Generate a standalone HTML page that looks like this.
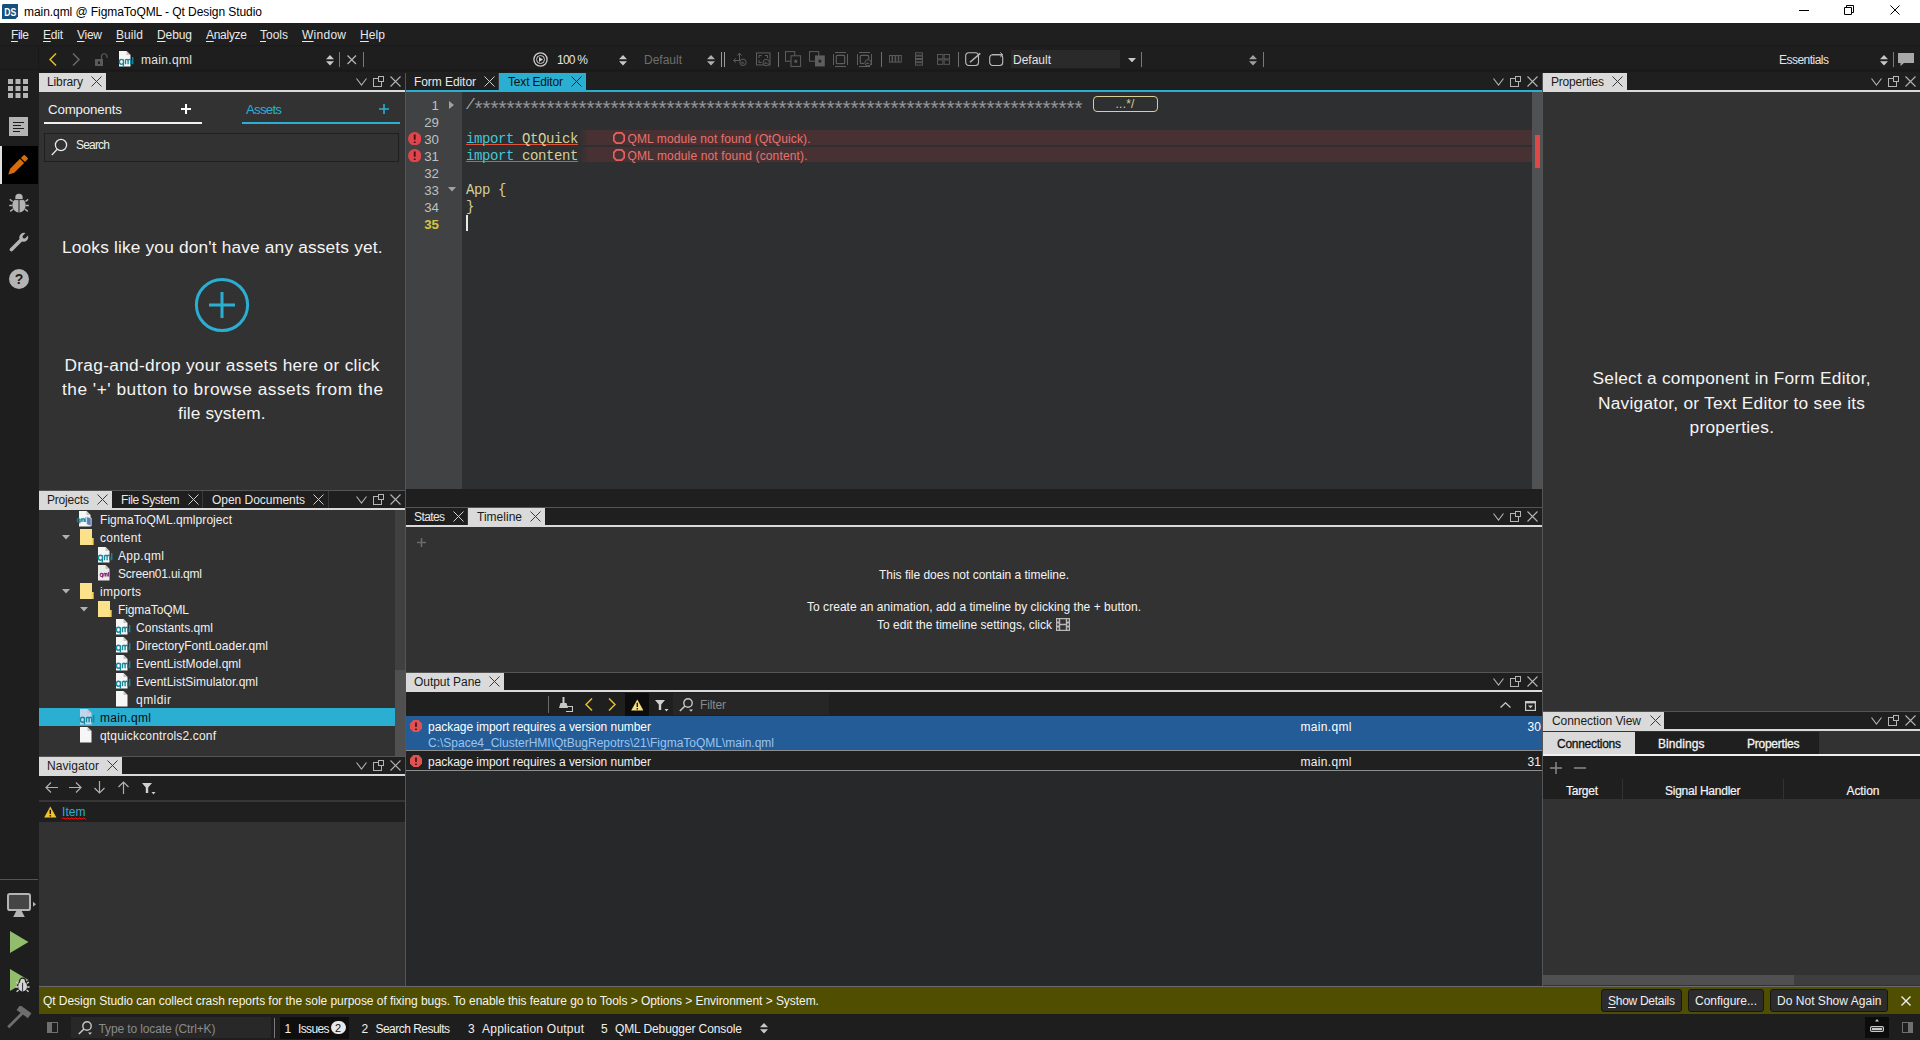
<!DOCTYPE html>
<html><head><meta charset="utf-8"><title>main.qml @ FigmaToQML - Qt Design Studio</title>
<style>
html,body{margin:0;padding:0;width:1920px;height:1040px;overflow:hidden;background:#1f1f1f}
body{position:relative;font-family:"Liberation Sans",sans-serif;font-size:12px}
div,span,svg{position:absolute;display:block}
.t{white-space:pre}
.m{white-space:pre;font-family:"Liberation Mono",monospace}
.m span{position:static;display:inline}
u{text-decoration:underline;text-underline-offset:1.5px;text-decoration-thickness:1px}
</style></head><body>
<div style="left:0px;top:0px;width:1920px;height:23px;background:#fff;"></div>
<svg style="left:2px;top:4px;" width="16" height="15" viewBox="0 0 16 15"><path d="M1 0H16V12.5L13.5 15H0V1Z" fill="#14507a"></path><text x="2.2" y="11.7" font-family="Liberation Sans" font-weight="700" font-size="10.5" fill="#fff" textLength="12" lengthAdjust="spacingAndGlyphs">DS</text></svg>
<span class="t" style="left: 24px; top: 4px; font-size: 12px; line-height: 16px; color: rgb(0, 0, 0); letter-spacing: -0.064px;">main.qml @ FigmaToQML - Qt Design Studio</span>
<svg style="left:1799px;top:10px;" width="10" height="1" viewBox="0 0 10 1"><rect width="10" height="1" fill="#000"></rect></svg>
<svg style="left:1844px;top:5px;" width="10" height="10" viewBox="0 0 10 10"><path d="M2.5 2.5V0.5H9.5V7.5H7.5M0.5 2.5H7.5V9.5H0.5Z" stroke="#000" fill="none"></path></svg>
<svg style="left:1890px;top:5px;" width="10" height="10" viewBox="0 0 10 10"><path d="M0.5 0.5L9.5 9.5M9.5 0.5L0.5 9.5" stroke="#000" stroke-width="1.0" fill="none"></path></svg>
<div style="left:0px;top:23px;width:1920px;height:23px;background:#1f1f1f;"></div>
<div style="left:0px;top:45px;width:1920px;height:1px;background:#191919;"></div>
<span class="t" style="left: 11px; top: 27px; font-size: 12px; line-height: 16px; color: rgb(232, 232, 232); letter-spacing: -0.453px;"><u>F</u>ile</span>
<span class="t" style="left: 43px; top: 27px; font-size: 12px; line-height: 16px; color: rgb(232, 232, 232); letter-spacing: -0.234px;"><u>E</u>dit</span>
<span class="t" style="left: 77px; top: 27px; font-size: 12px; line-height: 16px; color: rgb(232, 232, 232); letter-spacing: -0.271px;"><u>V</u>iew</span>
<span class="t" style="left: 116px; top: 27px; font-size: 12px; line-height: 16px; color: rgb(232, 232, 232); letter-spacing: 0.074px;"><u>B</u>uild</span>
<span class="t" style="left: 157px; top: 27px; font-size: 12px; line-height: 16px; color: rgb(232, 232, 232); letter-spacing: -0.094px;"><u>D</u>ebug</span>
<span class="t" style="left: 206px; top: 27px; font-size: 12px; line-height: 16px; color: rgb(232, 232, 232); letter-spacing: -0.284px;"><u>A</u>nalyze</span>
<span class="t" style="left: 260px; top: 27px; font-size: 12px; line-height: 16px; color: rgb(232, 232, 232); letter-spacing: -0.004px;"><u>T</u>ools</span>
<span class="t" style="left: 302px; top: 27px; font-size: 12px; line-height: 16px; color: rgb(232, 232, 232); letter-spacing: 0.263px;"><u>W</u>indow</span>
<span class="t" style="left: 360px; top: 27px; font-size: 12px; line-height: 16px; color: rgb(232, 232, 232); letter-spacing: 0.104px;"><u>H</u>elp</span>
<div style="left:0px;top:46px;width:1920px;height:27px;background:#1e1e1e;"></div>
<div style="left:39px;top:69px;width:1881px;height:4px;background:#1a1a1a;"></div>
<div style="left:0px;top:46px;width:39px;height:994px;background:#1e1e1e;"></div>
<div style="left:0px;top:69px;width:39px;height:1px;background:#181818;"></div>
<div style="left:38px;top:46px;width:1px;height:23px;background:#181818;"></div>
<svg style="left:49px;top:53px;" width="8" height="13" viewBox="0 0 8 13"><path d="M7 0.5L1 6.5L7 12.5" stroke="#e6c02a" stroke-width="1.5" fill="none"></path></svg>
<svg style="left:72px;top:53px;" width="8" height="13" viewBox="0 0 8 13"><path d="M1 0.5L7 6.5L1 12.5" stroke="#6a6a6a" stroke-width="1.5" fill="none"></path></svg>
<svg style="left:95px;top:53px;" width="13" height="13" viewBox="0 0 13 13"><rect x="0" y="6" width="8" height="7" fill="#5a5a5a"></rect><rect x="3" y="8.5" width="2" height="2.5" fill="#1e1e1e"></rect><path d="M6.5 6V3.5A2.7 2.7 0 0 1 12 3.5V5" stroke="#5a5a5a" stroke-width="1.2" fill="none"></path></svg>
<svg style="left:118px;top:51px;overflow:visible;" width="16" height="16" viewBox="0 0 16 16"><path d="M1 0H8.5L12.5 4V15.6H1Z" fill="#f6f6f6"></path><path d="M8.5 0V4H12.5Z" fill="#c4c4c4"></path><path d="M4.9 8V15.2M4.9 9.6Q4.6 8 2.9 8Q0.9 8 0.9 10.5Q0.9 13 2.9 13Q4.6 13 4.9 11.4M7 8V13M7 9.6Q7.2 8 8.4 8Q9.6 8 9.6 9.6V13M9.6 9.6Q9.8 8 11 8Q12.2 8 12.2 9.6V13M14.2 5.8V13" stroke="#16889c" stroke-width="1.35" fill="none" transform="translate(0.5,0.3)"></path></svg>
<span class="t" style="left: 141px; top: 52px; font-size: 12px; line-height: 16px; color: rgb(228, 228, 228); letter-spacing: 0.33px;">main.qml</span>
<svg style="left:326px;top:54.5px;" width="8" height="11" viewBox="0 0 8 11"><path d="M4 0L8 4.3H0Z M4 10.6L8 6.3H0Z" fill="#c8c8c8"></path></svg>
<div style="left:339px;top:52px;width:1px;height:15px;background:#7a7a7a;"></div>
<svg style="left:347px;top:55px;" width="9.5" height="9.5" viewBox="0 0 9.5 9.5"><path d="M0.5 0.5L9.0 9.0M9.0 0.5L0.5 9.0" stroke="#b8b8b8" stroke-width="1.2" fill="none"></path></svg>
<div style="left:363px;top:52px;width:1px;height:15px;background:#7a7a7a;"></div>
<svg style="left:533px;top:52px;" width="15" height="15" viewBox="0 0 15 15"><circle cx="7.5" cy="7.5" r="6.6" stroke="#d0d0d0" stroke-width="1.3" fill="none"></circle><circle cx="7.5" cy="7.5" r="4" stroke="#d0d0d0" stroke-width="1" fill="none"></circle><path d="M6 5L10 7.5L6 10Z" fill="#d0d0d0"></path></svg>
<span class="t" style="left: 557px; top: 52px; font-size: 12px; line-height: 16px; color: rgb(228, 228, 228); letter-spacing: -0.758px;">100 %</span>
<svg style="left:619px;top:54.5px;" width="8" height="11" viewBox="0 0 8 11"><path d="M4 0L8 4.3H0Z M4 10.6L8 6.3H0Z" fill="#c8c8c8"></path></svg>
<span class="t" style="left: 644px; top: 52px; font-size: 12px; line-height: 16px; color: rgb(110, 110, 110); letter-spacing: -0.005px;">Default</span>
<svg style="left:707px;top:54.5px;" width="8" height="11" viewBox="0 0 8 11"><path d="M4 0L8 4.3H0Z M4 10.6L8 6.3H0Z" fill="#b0b0b0"></path></svg>
<div style="left:721px;top:52px;width:1px;height:15px;background:#9a9a9a;"></div>
<div style="left:724px;top:52px;width:1px;height:15px;background:#9a9a9a;"></div>
<svg style="left:733px;top:52px;" width="15" height="15" viewBox="0 0 15 15"><path d="M6.5 1.5V8.5M4.5 3.5L6.5 1.2L8.5 3.5M0.8 8.5H6.5M2.8 6.5L0.6 8.5L2.8 10.5" stroke="#5e5e5e" stroke-width="1" fill="none"></path><circle cx="10" cy="10.3" r="3.2" stroke="#5e5e5e" stroke-width="1" fill="#1e1e1e"></circle><path d="M8.4 11.100000000000001H11.4M8.4 11.100000000000001L9.8 9.5" stroke="#5e5e5e" stroke-width="0.9" fill="none"></path></svg>
<svg style="left:756px;top:52px;" width="15" height="15" viewBox="0 0 15 15"><rect x="0.5" y="0.9" width="13.5" height="12" stroke="#5e5e5e" stroke-width="1" fill="none"></rect><path d="M3 6V3.5H5.5M9 3.5H11.5V6M3 8V10.5H5.5" stroke="#5e5e5e" stroke-width="1" fill="none"></path><circle cx="10.2" cy="10.5" r="3.2" stroke="#5e5e5e" stroke-width="1" fill="#1e1e1e"></circle><path d="M8.6 11.3H11.6M8.6 11.3L10.0 9.7" stroke="#5e5e5e" stroke-width="0.9" fill="none"></path></svg>
<div style="left:778px;top:52px;width:1px;height:15px;background:#6e6e6e;"></div>
<svg style="left:785px;top:51px;" width="17" height="17" viewBox="0 0 17 17"><rect x="0.5" y="0.6" width="9.2" height="9.6" stroke="#5e5e5e" stroke-width="1" fill="none"></rect><rect x="6" y="4.8" width="9.6" height="10.6" stroke="#5e5e5e" stroke-width="1" fill="#1e1e1e"></rect><path d="M10.8 7.999999999999999L11.5 9.6L13.100000000000001 9.7L11.8 10.7L12.200000000000001 12.299999999999999L10.8 11.399999999999999L9.4 12.299999999999999L9.8 10.7L8.5 9.7L10.100000000000001 9.6Z" fill="#5e5e5e"></path></svg>
<svg style="left:809px;top:51px;" width="17" height="17" viewBox="0 0 17 17"><rect x="0.5" y="0.6" width="9.2" height="9.6" stroke="#5e5e5e" stroke-width="1" fill="none"></rect><rect x="6" y="4.4" width="9.8" height="11" fill="#5e5e5e"></rect><path d="M10.9 7.8L11.6 9.4L13.2 9.5L11.9 10.5L12.3 12.1L10.9 11.2L9.5 12.1L9.9 10.5L8.600000000000001 9.5L10.200000000000001 9.4Z" fill="#1e1e1e"></path></svg>
<svg style="left:833px;top:52px;" width="15" height="15" viewBox="0 0 15 15"><path d="M2 0.5H13M2 14.5H13M0.5 2V13M14.5 2V13" stroke="#5e5e5e" stroke-width="1" fill="none"></path><rect x="3.3" y="3.3" width="8.4" height="8.4" rx="1" stroke="#5e5e5e" stroke-width="1.2" fill="none"></rect></svg>
<svg style="left:857px;top:52px;" width="16" height="15" viewBox="0 0 16 15"><path d="M2 0.5H13M2 14.5H13M0.5 2V13M14.5 2V13" stroke="#5e5e5e" stroke-width="1" fill="none"></path><path d="M3.3 11.5V4.3A1 1 0 0 1 4.3 3.3H10.7A1 1 0 0 1 11.7 4.3V7" stroke="#5e5e5e" stroke-width="1.2" fill="none"></path><path d="M3.3 11.5H7" stroke="#5e5e5e" stroke-width="1.2"></path><circle cx="11" cy="10.8" r="3.2" stroke="#5e5e5e" stroke-width="1" fill="#1e1e1e"></circle><path d="M9.4 11.600000000000001H12.4M9.4 11.600000000000001L10.8 10.0" stroke="#5e5e5e" stroke-width="0.9" fill="none"></path></svg>
<div style="left:881px;top:52px;width:1px;height:15px;background:#6e6e6e;"></div>
<svg style="left:889px;top:55px;" width="13" height="8" viewBox="0 0 13 8"><rect x="0.5" y="0.5" width="2.5" height="6.6" stroke="#5e5e5e" stroke-width="0.9" fill="none"></rect><rect x="3.6" y="0.5" width="2.5" height="6.6" stroke="#5e5e5e" stroke-width="0.9" fill="none"></rect><rect x="6.7" y="0.5" width="2.5" height="6.6" stroke="#5e5e5e" stroke-width="0.9" fill="none"></rect><rect x="9.8" y="0.5" width="2.5" height="6.6" stroke="#5e5e5e" stroke-width="0.9" fill="none"></rect></svg>
<svg style="left:915px;top:52px;" width="8" height="14" viewBox="0 0 8 14"><rect x="0.5" y="0.8" width="7" height="2.4" stroke="#5e5e5e" stroke-width="0.9" fill="none"></rect><rect x="0.5" y="4.1" width="7" height="2.4" stroke="#5e5e5e" stroke-width="0.9" fill="none"></rect><rect x="0.5" y="7.3999999999999995" width="7" height="2.4" stroke="#5e5e5e" stroke-width="0.9" fill="none"></rect><rect x="0.5" y="10.7" width="7" height="2.4" stroke="#5e5e5e" stroke-width="0.9" fill="none"></rect></svg>
<svg style="left:937px;top:54px;" width="13" height="11" viewBox="0 0 13 11"><rect x="0.5" y="0.5" width="5.4" height="4.4" stroke="#5e5e5e" stroke-width="0.9" fill="none"></rect><rect x="0.5" y="5.9" width="5.4" height="4.4" stroke="#5e5e5e" stroke-width="0.9" fill="none"></rect><rect x="7.1" y="0.5" width="5.4" height="4.4" stroke="#5e5e5e" stroke-width="0.9" fill="none"></rect><rect x="7.1" y="5.9" width="5.4" height="4.4" stroke="#5e5e5e" stroke-width="0.9" fill="none"></rect></svg>
<div style="left:958px;top:52px;width:1px;height:15px;background:#6e6e6e;"></div>
<svg style="left:965px;top:51px;" width="17" height="16" viewBox="0 0 17 16"><rect x="0.7" y="1.7" width="12.8" height="12.8" rx="3" stroke="#bcbcbc" stroke-width="1.1" fill="none"></rect><path d="M5 11.3L15.3 2.4" stroke="#bcbcbc" stroke-width="1.4"></path><path d="M11 2.2L15.5 1.5L15.5 6.5Z" fill="#1e1e1e" opacity="0"></path></svg>
<svg style="left:989px;top:51px;" width="16" height="16" viewBox="0 0 16 16"><rect x="0.7" y="3.7" width="13" height="10.8" rx="3" stroke="#bcbcbc" stroke-width="1.1" fill="none"></rect><path d="M3 3.7H13.5" stroke="#bcbcbc" stroke-width="1.1"></path><path d="M11.3 1.5L13.7 3.7L11.3 6" stroke="#bcbcbc" stroke-width="1" fill="none"></path></svg>
<div style="left:1011px;top:50px;width:109px;height:18px;background:#2a2a2a;"></div>
<span class="t" style="left: 1013px; top: 52px; font-size: 12px; line-height: 16px; color: rgb(228, 228, 228); letter-spacing: -0.005px;">Default</span>
<svg style="left:1128px;top:58px;" width="8" height="4.4" viewBox="0 0 8 4.4"><path d="M0 0H8L4 4.4Z" fill="#c8c8c8"></path></svg>
<div style="left:1141px;top:52px;width:1px;height:15px;background:#7a7a7a;"></div>
<svg style="left:1249px;top:54.5px;" width="8" height="11" viewBox="0 0 8 11"><path d="M4 0L8 4.3H0Z M4 10.6L8 6.3H0Z" fill="#a0a0a0"></path></svg>
<div style="left:1263px;top:52px;width:1px;height:15px;background:#7a7a7a;"></div>
<span class="t" style="left: 1779px; top: 52px; font-size: 12px; line-height: 16px; color: rgb(228, 228, 228); letter-spacing: -0.523px;">Essentials</span>
<svg style="left:1880px;top:54.5px;" width="8" height="11" viewBox="0 0 8 11"><path d="M4 0L8 4.3H0Z M4 10.6L8 6.3H0Z" fill="#c8c8c8"></path></svg>
<div style="left:1893px;top:52px;width:1px;height:15px;background:#7a7a7a;"></div>
<svg style="left:1898px;top:53px;" width="16" height="13" viewBox="0 0 16 13"><path d="M0 0H16V10H6L2.5 13V10H0Z" fill="#a8a8a8"></path></svg>
<svg style="left:8px;top:79px;" width="20" height="19" viewBox="0 0 20 19"><rect x="0" y="0" width="5" height="5" fill="#b4b4b4"></rect><rect x="0" y="7" width="5" height="5" fill="#b4b4b4"></rect><rect x="0" y="14" width="5" height="5" fill="#b4b4b4"></rect><rect x="7.5" y="0" width="5" height="5" fill="#b4b4b4"></rect><rect x="7.5" y="7" width="5" height="5" fill="#b4b4b4"></rect><rect x="7.5" y="14" width="5" height="5" fill="#b4b4b4"></rect><rect x="15" y="0" width="5" height="5" fill="#b4b4b4"></rect><rect x="15" y="7" width="5" height="5" fill="#b4b4b4"></rect><rect x="15" y="14" width="5" height="5" fill="#b4b4b4"></rect></svg>
<svg style="left:9px;top:117px;" width="19" height="19" viewBox="0 0 19 19"><rect width="19" height="19" fill="#b4b4b4"></rect><path d="M4 5.5H15M4 8.5H12M4 11.5H15M4 14.5H11" stroke="#1b1b1b" stroke-width="1.2"></path></svg>
<div style="left:0px;top:146px;width:38px;height:38px;background:#000;"></div>
<div style="left:0px;top:146px;width:2px;height:38px;background:#e0e0e0;"></div>
<svg style="left:7px;top:155px;" width="22" height="21" viewBox="0 0 22 21"><g transform="translate(1.3,19.6) rotate(-45)" fill="#d96d0c"><path d="M0 0L5.5 -2.9H19.4V2.9H5.5Z"></path><path d="M20.6 -2.9H24.2a1.3 1.3 0 0 1 1.3 1.3V1.6a1.3 1.3 0 0 1 -1.3 1.3H20.6Z"></path></g></svg>
<svg style="left:9px;top:193px;" width="20" height="20" viewBox="0 0 20 20"><path d="M3.6 8.5L0.8 6.4M16.4 8.5L19.2 6.4M3.4 12.5H0.2M16.6 12.5H19.8M4.2 16L1.2 18.4M15.8 16L18.8 18.4" stroke="#b4b4b4" stroke-width="1.5"></path><ellipse cx="10" cy="12" rx="6.7" ry="7.6" fill="#b4b4b4"></ellipse><circle cx="10" cy="4.4" r="3.7" fill="#b4b4b4"></circle><path d="M4.5 6.6H15.5" stroke="#1e1e1e" stroke-width="0.9"></path><path d="M10 6.6V19.6" stroke="#1e1e1e" stroke-width="1"></path></svg>
<svg style="left:9px;top:232px;" width="20" height="20" viewBox="0 0 20 20"><path d="M1.2 16.2L10.5 7A4.8 4.8 0 0 1 16.5 1L13.5 4L14 6.2L16 6.6L19 3.6A4.8 4.8 0 0 1 13 9.6L3.8 18.8A1.8 1.8 0 0 1 1.2 16.2Z" fill="#b4b4b4"></path></svg>
<svg style="left:9px;top:269px;" width="20" height="20" viewBox="0 0 20 20"><circle cx="10" cy="10" r="10" fill="#b4b4b4"></circle><text x="10" y="15" font-family="Liberation Sans" font-weight="700" font-size="14" fill="#1b1b1b" text-anchor="middle">?</text></svg>
<div style="left:0px;top:879px;width:38px;height:1px;background:#555555;"></div>
<svg style="left:7px;top:893px;" width="30" height="25" viewBox="0 0 30 25"><rect x="1" y="1" width="22" height="16" rx="1.8" stroke="#b4b4b4" stroke-width="2" fill="#454545"></rect><path d="M9.3 18H14.7L17.8 24H6.2Z" fill="#b4b4b4"></path><path d="M26 8.8L29 11.3L26 13.8Z" fill="#b4b4b4"></path></svg>
<svg style="left:10px;top:931px;" width="19" height="22" viewBox="0 0 19 22"><path d="M0 0L18.5 11L0 22Z" fill="#92bd6c"></path></svg>
<svg style="left:10px;top:969px;" width="22" height="25" viewBox="0 0 22 25"><path d="M0 0L18.5 11L0 22Z" fill="#92bd6c"></path><g stroke="#1e1e1e" stroke-width="2.4" fill="#1e1e1e"><ellipse cx="12.6" cy="17.4" rx="4.4" ry="5"></ellipse><circle cx="12.6" cy="12.2" r="2.4"></circle></g><path d="M8.4 14.6L6.4 13M16.8 14.6L18.8 13M8 18H5.6M17.2 18H19.6M8.6 21L6.6 22.8M16.6 21L18.6 22.8" stroke="#d4d4d4" stroke-width="1.3"></path><ellipse cx="12.6" cy="17.4" rx="4.4" ry="5" fill="#d4d4d4"></ellipse><circle cx="12.6" cy="12.2" r="2.4" fill="#d4d4d4"></circle><path d="M12.6 13.8V22.4" stroke="#1e1e1e" stroke-width="0.9"></path></svg>
<svg style="left:7px;top:1006px;" width="26" height="23" viewBox="0 0 26 23"><path d="M1.2 21.3L15 7.5" stroke="#6e6e6e" stroke-width="2.8"></path><rect x="-7" y="-3" width="14" height="6" fill="#6e6e6e" transform="translate(17,5.6) rotate(36)"></rect></svg>
<div style="left:39px;top:92px;width:366px;height:398px;background:#323232;"></div>
<div style="left:39px;top:72px;width:366px;height:18px;background:#1f1f1f;"></div>
<div style="left:39px;top:90px;width:366px;height:2px;background:#dadada;"></div>
<div style="left:39px;top:73px;width:67px;height:17px;background:#dadada;"></div>
<span class="t" style="left: 47px; top: 73.5px; font-size: 12px; line-height: 16px; color: rgb(26, 26, 26); letter-spacing: -0.115px;">Library</span>
<svg style="left:91px;top:76px;" width="11" height="11" viewBox="0 0 11 11"><path d="M0.5 0.5L10.5 10.5M10.5 0.5L0.5 10.5" stroke="#3a3a3a" stroke-width="1.0" fill="none"></path></svg>
<svg style="left:356px;top:77.5px;" width="11" height="8" viewBox="0 0 11 8"><path d="M0.5 0.5L5.5 7L10.5 0.5" stroke="#b4b4b4" stroke-width="1.1" fill="none"></path></svg>
<svg style="left:373px;top:76.0px;" width="11" height="11" viewBox="0 0 11 11"><rect x="0.5" y="2.5" width="8" height="8" stroke="#b4b4b4" stroke-width="1" fill="#1f1f1f"></rect><rect x="5.5" y="0.5" width="5" height="5" stroke="#b4b4b4" stroke-width="1" fill="#1f1f1f"></rect></svg>
<svg style="left:390px;top:76.0px;" width="11" height="11" viewBox="0 0 11 11"><path d="M0.5 0.5L10.5 10.5M10.5 0.5L0.5 10.5" stroke="#b4b4b4" stroke-width="1.1" fill="none"></path></svg>
<span class="t" style="left: 48px; top: 101.5px; font-size: 13.3px; line-height: 16px; color: rgb(240, 240, 240); letter-spacing: -0.156px;">Components</span>
<svg style="left:181px;top:104px;" width="10" height="10" viewBox="0 0 10 10"><path d="M5 0V10M0 5H10" stroke="#fff" stroke-width="2"></path></svg>
<div style="left:44px;top:122px;width:158px;height:2px;background:#f0f0f0;"></div>
<span class="t" style="left: 246px; top: 101.5px; font-size: 13.3px; line-height: 16px; color: rgb(42, 175, 211); letter-spacing: -0.781px;">Assets</span>
<svg style="left:379px;top:104px;" width="10" height="10" viewBox="0 0 10 10"><path d="M5 0V10M0 5H10" stroke="#2aafd3" stroke-width="1.6"></path></svg>
<div style="left:242px;top:122px;width:158px;height:2px;background:#2aafd3;"></div>
<div style="left:44px;top:133px;width:355px;height:29px;background:#1f1f1f;"></div>
<div style="left:45px;top:134px;width:353px;height:27px;background:#323232;"></div>
<svg style="left:51px;top:138px;" width="17" height="18" viewBox="0 0 17 18"><circle cx="10" cy="7" r="5.6" stroke="#e8e8e8" stroke-width="1.3" fill="none"></circle><path d="M6 11.5L0.8 17" stroke="#e8e8e8" stroke-width="1.3"></path></svg>
<span class="t" style="left: 76px; top: 137px; font-size: 12px; line-height: 16px; color: rgb(240, 240, 240); letter-spacing: -0.806px;">Search</span>
<span class="t" style="left: 62px; top: 234.5px; font-size: 17.3px; line-height: 24px; color: rgb(244, 244, 244); letter-spacing: 0.173px;">Looks like you don't have any assets yet.</span>
<svg style="left:194px;top:277px;" width="56" height="56" viewBox="0 0 56 56"><circle cx="28" cy="28" r="25.6" stroke="#2aafd3" stroke-width="3" fill="none"></circle><path d="M28 15V41M15 28H41" stroke="#2aafd3" stroke-width="3"></path></svg>
<span class="t" style="left: 64.5px; top: 352.8px; font-size: 17.3px; line-height: 24px; color: rgb(244, 244, 244); letter-spacing: 0.302px;">Drag-and-drop your assets here or click</span>
<span class="t" style="left: 62px; top: 376.8px; font-size: 17.3px; line-height: 24px; color: rgb(244, 244, 244); letter-spacing: 0.512px;">the '+' button to browse assets from the</span>
<span class="t" style="left: 178px; top: 400.8px; font-size: 17.3px; line-height: 24px; color: rgb(244, 244, 244); letter-spacing: 0.097px;">file system.</span>
<div style="left:39px;top:510px;width:366px;height:246px;background:#323232;"></div>
<div style="left:39px;top:490px;width:366px;height:18px;background:#1f1f1f;"></div>
<div style="left:39px;top:508px;width:366px;height:2px;background:#dadada;"></div>
<div style="left:39px;top:490px;width:366px;height:1px;background:#555555;"></div>
<div style="left:39px;top:491px;width:73px;height:17px;background:#dadada;"></div>
<span class="t" style="left: 47px; top: 491.5px; font-size: 12px; line-height: 16px; color: rgb(26, 26, 26); letter-spacing: -0.194px;">Projects</span>
<svg style="left:97px;top:494px;" width="11" height="11" viewBox="0 0 11 11"><path d="M0.5 0.5L10.5 10.5M10.5 0.5L0.5 10.5" stroke="#3a3a3a" stroke-width="1.0" fill="none"></path></svg>
<div style="left:202px;top:491px;width:1px;height:17px;background:#3a3a3a;"></div>
<span class="t" style="left: 121px; top: 491.5px; font-size: 12px; line-height: 16px; color: rgb(232, 232, 232); letter-spacing: -0.419px;">File System</span>
<svg style="left:188px;top:494px;" width="11" height="11" viewBox="0 0 11 11"><path d="M0.5 0.5L10.5 10.5M10.5 0.5L0.5 10.5" stroke="#d0d0d0" stroke-width="1.0" fill="none"></path></svg>
<div style="left:328px;top:491px;width:1px;height:17px;background:#3a3a3a;"></div>
<span class="t" style="left: 212px; top: 491.5px; font-size: 12px; line-height: 16px; color: rgb(232, 232, 232); letter-spacing: -0.03px;">Open Documents</span>
<svg style="left:313px;top:494px;" width="11" height="11" viewBox="0 0 11 11"><path d="M0.5 0.5L10.5 10.5M10.5 0.5L0.5 10.5" stroke="#d0d0d0" stroke-width="1.0" fill="none"></path></svg>
<svg style="left:356px;top:495.5px;" width="11" height="8" viewBox="0 0 11 8"><path d="M0.5 0.5L5.5 7L10.5 0.5" stroke="#b4b4b4" stroke-width="1.1" fill="none"></path></svg>
<svg style="left:373px;top:494.0px;" width="11" height="11" viewBox="0 0 11 11"><rect x="0.5" y="2.5" width="8" height="8" stroke="#b4b4b4" stroke-width="1" fill="#1f1f1f"></rect><rect x="5.5" y="0.5" width="5" height="5" stroke="#b4b4b4" stroke-width="1" fill="#1f1f1f"></rect></svg>
<svg style="left:390px;top:494.0px;" width="11" height="11" viewBox="0 0 11 11"><path d="M0.5 0.5L10.5 10.5M10.5 0.5L0.5 10.5" stroke="#b4b4b4" stroke-width="1.1" fill="none"></path></svg>
<div style="left:395px;top:510px;width:10px;height:246px;background:#505050;"></div>
<div style="left:395px;top:510px;width:10px;height:160px;background:#404040;"></div>
<svg style="left:78px;top:511px;overflow:visible;" width="16" height="16" viewBox="0 0 16 16"><path d="M1 0H8.5L12.5 4V15.6H1Z" fill="#f6f6f6"></path><path d="M8.5 0V4H12.5Z" fill="#c4c4c4"></path><path d="M4.9 8V15.2M4.9 9.6Q4.6 8 2.9 8Q0.9 8 0.9 10.5Q0.9 13 2.9 13Q4.6 13 4.9 11.4M7 8V13M7 9.6Q7.2 8 8.4 8Q9.6 8 9.6 9.6V13M9.6 9.6Q9.8 8 11 8Q12.2 8 12.2 9.6V13M14.2 5.8V13" stroke="#16889c" stroke-width="1.7" fill="none" transform="translate(-1.4,2.4) scale(0.66)"></path><path d="M8.6 5.5L13.2 7V15L8.6 13.5Z" fill="#5f7fb4" stroke="#e4eaf4" stroke-width="0.8"></path></svg>
<span class="t" style="left: 100px; top: 512px; font-size: 12px; line-height: 16px; color: rgb(240, 240, 240); letter-spacing: 0.064px;">FigmaToQML.qmlproject</span>
<svg style="left:62px;top:535px;" width="8" height="5" viewBox="0 0 8 5"><path d="M0 0H8L4 4.5Z" fill="#b0b0b0"></path></svg>
<svg style="left:80px;top:529px;" width="14" height="16" viewBox="0 0 14 16"><path d="M0 0H12V9H13.4V16H0Z" fill="#fbe18a"></path><path d="M11.6 9H13.4V16H11.6Z" fill="#f3cf62"></path></svg>
<span class="t" style="left: 100px; top: 530px; font-size: 12px; line-height: 16px; color: rgb(240, 240, 240); letter-spacing: 0.271px;">content</span>
<svg style="left:97px;top:547px;overflow:visible;" width="16" height="16" viewBox="0 0 16 16"><path d="M1 0H8.5L12.5 4V15.6H1Z" fill="#f6f6f6"></path><path d="M8.5 0V4H12.5Z" fill="#c4c4c4"></path><path d="M4.9 8V15.2M4.9 9.6Q4.6 8 2.9 8Q0.9 8 0.9 10.5Q0.9 13 2.9 13Q4.6 13 4.9 11.4M7 8V13M7 9.6Q7.2 8 8.4 8Q9.6 8 9.6 9.6V13M9.6 9.6Q9.8 8 11 8Q12.2 8 12.2 9.6V13M14.2 5.8V13" stroke="#16889c" stroke-width="1.35" fill="none" transform="translate(0.5,0.3)"></path></svg>
<span class="t" style="left: 118px; top: 548px; font-size: 12px; line-height: 16px; color: rgb(240, 240, 240); letter-spacing: 0.328px;">App.qml</span>
<svg style="left:97px;top:565px;overflow:visible;" width="16" height="16" viewBox="0 0 16 16"><path d="M1 0H8.5L12.5 4V15.6H1Z" fill="#ecece6"></path><path d="M8.5 0V4H12.5Z" fill="#c4c4c4"></path><path d="M4.9 8V15.2M4.9 9.6Q4.6 8 2.9 8Q0.9 8 0.9 10.5Q0.9 13 2.9 13Q4.6 13 4.9 11.4M7 8V13M7 9.6Q7.2 8 8.4 8Q9.6 8 9.6 9.6V13M9.6 9.6Q9.8 8 11 8Q12.2 8 12.2 9.6V13M14.2 5.8V13" stroke="#8a2a8a" stroke-width="1.7" fill="none" transform="translate(2.6,3.4) scale(0.62)"></path></svg>
<span class="t" style="left: 118px; top: 566px; font-size: 12px; line-height: 16px; color: rgb(240, 240, 240); letter-spacing: -0.194px;">Screen01.ui.qml</span>
<svg style="left:62px;top:589px;" width="8" height="5" viewBox="0 0 8 5"><path d="M0 0H8L4 4.5Z" fill="#b0b0b0"></path></svg>
<svg style="left:80px;top:583px;" width="14" height="16" viewBox="0 0 14 16"><path d="M0 0H12V9H13.4V16H0Z" fill="#fbe18a"></path><path d="M11.6 9H13.4V16H11.6Z" fill="#f3cf62"></path></svg>
<span class="t" style="left: 100px; top: 584px; font-size: 12px; line-height: 16px; color: rgb(240, 240, 240); letter-spacing: 0.276px;">imports</span>
<svg style="left:80px;top:607px;" width="8" height="5" viewBox="0 0 8 5"><path d="M0 0H8L4 4.5Z" fill="#b0b0b0"></path></svg>
<svg style="left:98px;top:601px;" width="14" height="16" viewBox="0 0 14 16"><path d="M0 0H12V9H13.4V16H0Z" fill="#fbe18a"></path><path d="M11.6 9H13.4V16H11.6Z" fill="#f3cf62"></path></svg>
<span class="t" style="left: 118px; top: 602px; font-size: 12px; line-height: 16px; color: rgb(240, 240, 240); letter-spacing: -0.115px;">FigmaToQML</span>
<svg style="left:115px;top:619px;overflow:visible;" width="16" height="16" viewBox="0 0 16 16"><path d="M1 0H8.5L12.5 4V15.6H1Z" fill="#f6f6f6"></path><path d="M8.5 0V4H12.5Z" fill="#c4c4c4"></path><path d="M4.9 8V15.2M4.9 9.6Q4.6 8 2.9 8Q0.9 8 0.9 10.5Q0.9 13 2.9 13Q4.6 13 4.9 11.4M7 8V13M7 9.6Q7.2 8 8.4 8Q9.6 8 9.6 9.6V13M9.6 9.6Q9.8 8 11 8Q12.2 8 12.2 9.6V13M14.2 5.8V13" stroke="#16889c" stroke-width="1.35" fill="none" transform="translate(0.5,0.3)"></path></svg>
<span class="t" style="left: 136px; top: 620px; font-size: 12px; line-height: 16px; color: rgb(240, 240, 240); letter-spacing: 0.025px;">Constants.qml</span>
<svg style="left:115px;top:637px;overflow:visible;" width="16" height="16" viewBox="0 0 16 16"><path d="M1 0H8.5L12.5 4V15.6H1Z" fill="#f6f6f6"></path><path d="M8.5 0V4H12.5Z" fill="#c4c4c4"></path><path d="M4.9 8V15.2M4.9 9.6Q4.6 8 2.9 8Q0.9 8 0.9 10.5Q0.9 13 2.9 13Q4.6 13 4.9 11.4M7 8V13M7 9.6Q7.2 8 8.4 8Q9.6 8 9.6 9.6V13M9.6 9.6Q9.8 8 11 8Q12.2 8 12.2 9.6V13M14.2 5.8V13" stroke="#16889c" stroke-width="1.35" fill="none" transform="translate(0.5,0.3)"></path></svg>
<span class="t" style="left: 136px; top: 638px; font-size: 12px; line-height: 16px; color: rgb(240, 240, 240); letter-spacing: 0.028px;">DirectoryFontLoader.qml</span>
<svg style="left:115px;top:655px;overflow:visible;" width="16" height="16" viewBox="0 0 16 16"><path d="M1 0H8.5L12.5 4V15.6H1Z" fill="#f6f6f6"></path><path d="M8.5 0V4H12.5Z" fill="#c4c4c4"></path><path d="M4.9 8V15.2M4.9 9.6Q4.6 8 2.9 8Q0.9 8 0.9 10.5Q0.9 13 2.9 13Q4.6 13 4.9 11.4M7 8V13M7 9.6Q7.2 8 8.4 8Q9.6 8 9.6 9.6V13M9.6 9.6Q9.8 8 11 8Q12.2 8 12.2 9.6V13M14.2 5.8V13" stroke="#16889c" stroke-width="1.35" fill="none" transform="translate(0.5,0.3)"></path></svg>
<span class="t" style="left: 136px; top: 656px; font-size: 12px; line-height: 16px; color: rgb(240, 240, 240); letter-spacing: 0.017px;">EventListModel.qml</span>
<svg style="left:115px;top:673px;overflow:visible;" width="16" height="16" viewBox="0 0 16 16"><path d="M1 0H8.5L12.5 4V15.6H1Z" fill="#f6f6f6"></path><path d="M8.5 0V4H12.5Z" fill="#c4c4c4"></path><path d="M4.9 8V15.2M4.9 9.6Q4.6 8 2.9 8Q0.9 8 0.9 10.5Q0.9 13 2.9 13Q4.6 13 4.9 11.4M7 8V13M7 9.6Q7.2 8 8.4 8Q9.6 8 9.6 9.6V13M9.6 9.6Q9.8 8 11 8Q12.2 8 12.2 9.6V13M14.2 5.8V13" stroke="#16889c" stroke-width="1.35" fill="none" transform="translate(0.5,0.3)"></path></svg>
<span class="t" style="left: 136px; top: 674px; font-size: 12px; line-height: 16px; color: rgb(240, 240, 240); letter-spacing: -0.003px;">EventListSimulator.qml</span>
<svg style="left:115px;top:691px;" width="14" height="16" viewBox="0 0 14 16"><path d="M1 0H8.5L12.5 4V15.6H1Z" fill="#f6f6f6"></path><path d="M8.5 0V4H12.5Z" fill="#c4c4c4"></path></svg>
<span class="t" style="left: 136px; top: 692px; font-size: 12px; line-height: 16px; color: rgb(240, 240, 240); letter-spacing: 0.466px;">qmldir</span>
<div style="left:39px;top:708px;width:356px;height:18px;background:#2aafd3;"></div>
<svg style="left:79px;top:709px;overflow:visible;" width="16" height="16" viewBox="0 0 16 16"><path d="M1 0H8.5L12.5 4V15.6H1Z" fill="#bdd7ee"></path><path d="M8.5 0V4H12.5Z" fill="#c4c4c4"></path><path d="M4.9 8V15.2M4.9 9.6Q4.6 8 2.9 8Q0.9 8 0.9 10.5Q0.9 13 2.9 13Q4.6 13 4.9 11.4M7 8V13M7 9.6Q7.2 8 8.4 8Q9.6 8 9.6 9.6V13M9.6 9.6Q9.8 8 11 8Q12.2 8 12.2 9.6V13M14.2 5.8V13" stroke="#16889c" stroke-width="1.35" fill="none" transform="translate(0.5,0.3)"></path></svg>
<span class="t" style="left: 100px; top: 710px; font-size: 12px; line-height: 16px; color: rgb(10, 10, 10); letter-spacing: 0.33px;">main.qml</span>
<svg style="left:79px;top:727px;" width="14" height="16" viewBox="0 0 14 16"><path d="M1 0H8.5L12.5 4V15.6H1Z" fill="#f6f6f6"></path><path d="M8.5 0V4H12.5Z" fill="#c4c4c4"></path></svg>
<span class="t" style="left: 100px; top: 728px; font-size: 12px; line-height: 16px; color: rgb(240, 240, 240); letter-spacing: 0.163px;">qtquickcontrols2.conf</span>
<div style="left:39px;top:776px;width:366px;height:210px;background:#323232;"></div>
<div style="left:39px;top:756px;width:366px;height:18px;background:#1f1f1f;"></div>
<div style="left:39px;top:774px;width:366px;height:2px;background:#dadada;"></div>
<div style="left:39px;top:756px;width:366px;height:1px;background:#555555;"></div>
<div style="left:39px;top:757px;width:83px;height:17px;background:#dadada;"></div>
<span class="t" style="left: 47px; top: 757.5px; font-size: 12px; line-height: 16px; color: rgb(26, 26, 26); letter-spacing: 0.08px;">Navigator</span>
<svg style="left:107px;top:760px;" width="11" height="11" viewBox="0 0 11 11"><path d="M0.5 0.5L10.5 10.5M10.5 0.5L0.5 10.5" stroke="#3a3a3a" stroke-width="1.0" fill="none"></path></svg>
<svg style="left:356px;top:761.5px;" width="11" height="8" viewBox="0 0 11 8"><path d="M0.5 0.5L5.5 7L10.5 0.5" stroke="#b4b4b4" stroke-width="1.1" fill="none"></path></svg>
<svg style="left:373px;top:760.0px;" width="11" height="11" viewBox="0 0 11 11"><rect x="0.5" y="2.5" width="8" height="8" stroke="#b4b4b4" stroke-width="1" fill="#1f1f1f"></rect><rect x="5.5" y="0.5" width="5" height="5" stroke="#b4b4b4" stroke-width="1" fill="#1f1f1f"></rect></svg>
<svg style="left:390px;top:760.0px;" width="11" height="11" viewBox="0 0 11 11"><path d="M0.5 0.5L10.5 10.5M10.5 0.5L0.5 10.5" stroke="#b4b4b4" stroke-width="1.1" fill="none"></path></svg>
<div style="left:39px;top:776px;width:366px;height:25px;background:#1f1f1f;"></div>
<div style="left:39px;top:800px;width:366px;height:2px;background:#363636;"></div>
<svg style="left:45px;top:782px;" width="13" height="11" viewBox="0 0 13 11"><path d="M13 5.5H1M6 0.5L1 5.5L6 10.5" stroke="#b0b0b0" stroke-width="1.2" fill="none"></path></svg>
<svg style="left:69px;top:782px;" width="13" height="11" viewBox="0 0 13 11"><path d="M0 5.5H12M7 0.5L12 5.5L7 10.5" stroke="#b0b0b0" stroke-width="1.2" fill="none"></path></svg>
<svg style="left:94px;top:781px;" width="11" height="13" viewBox="0 0 11 13"><path d="M5.5 0V12M0.5 7L5.5 12L10.5 7" stroke="#b0b0b0" stroke-width="1.2" fill="none"></path></svg>
<svg style="left:118px;top:781px;" width="11" height="13" viewBox="0 0 11 13"><path d="M5.5 13V1M0.5 6L5.5 1L10.5 6" stroke="#b0b0b0" stroke-width="1.2" fill="none"></path></svg>
<svg style="left:142px;top:783.3px;" width="14" height="12" viewBox="0 0 14 12"><path d="M0 0H10L6.2 4.5V10H3.8V4.5Z" fill="#d0d0d0"></path><path d="M9.5 9H13.5L11.5 11.5Z" fill="#d0d0d0"></path></svg>
<div style="left:39px;top:802px;width:366px;height:20px;background:#1f1f1f;"></div>
<svg style="left:44px;top:806px;" width="12.6" height="12" viewBox="0 0 14 13"><path d="M7 0.3L13.8 12.7H0.2Z" fill="#f4c22c"></path><path d="M7 4V8.6M7 9.8V11.4" stroke="#1a1a1a" stroke-width="1.6"></path></svg>
<span class="t" style="left: 62px; top: 804px; font-size: 12px; line-height: 16px; color: rgb(42, 175, 211); letter-spacing: 0.052px;">Item</span>
<svg style="left:62px;top:816.5px;" width="25" height="3" viewBox="0 0 25 3"><path d="M0 2L1 1L2 1L3 2L4 2L5 1L6 1L7 2L8 2L9 1L10 1L11 2L12 2L13 1L14 1L15 2L16 2L17 1L18 1L19 2L20 2L21 1L22 1L23 2L24 2" stroke="#e01818" stroke-width="1" fill="none"></path></svg>
<div style="left:405px;top:73px;width:1px;height:913px;background:#555555;"></div>
<div style="left:1542px;top:73px;width:1px;height:913px;background:#555555;"></div>
<div style="left:406px;top:92px;width:1126px;height:397px;background:#2e2f30;"></div>
<div style="left:406px;top:92px;width:56px;height:397px;background:#404244;"></div>
<div style="left:406px;top:72px;width:1136px;height:18px;background:#1f1f1f;"></div>
<div style="left:406px;top:90px;width:1136px;height:2px;background:#2aafd3;"></div>
<div style="left:498px;top:73px;width:1px;height:17px;background:#3a3a3a;"></div>
<span class="t" style="left: 414px; top: 73.5px; font-size: 12px; line-height: 16px; color: rgb(232, 232, 232); letter-spacing: -0.069px;">Form Editor</span>
<svg style="left:484px;top:76px;" width="11" height="11" viewBox="0 0 11 11"><path d="M0.5 0.5L10.5 10.5M10.5 0.5L0.5 10.5" stroke="#d0d0d0" stroke-width="1.0" fill="none"></path></svg>
<div style="left:499px;top:73px;width:87px;height:17px;background:#2aafd3;"></div>
<span class="t" style="left: 508px; top: 73.5px; font-size: 12px; line-height: 16px; color: rgb(17, 17, 17); letter-spacing: -0.17px;">Text Editor</span>
<svg style="left:571px;top:76px;" width="11" height="11" viewBox="0 0 11 11"><path d="M0.5 0.5L10.5 10.5M10.5 0.5L0.5 10.5" stroke="#222" stroke-width="1.0" fill="none"></path></svg>
<svg style="left:1493px;top:77.5px;" width="11" height="8" viewBox="0 0 11 8"><path d="M0.5 0.5L5.5 7L10.5 0.5" stroke="#b4b4b4" stroke-width="1.1" fill="none"></path></svg>
<svg style="left:1510px;top:76.0px;" width="11" height="11" viewBox="0 0 11 11"><rect x="0.5" y="2.5" width="8" height="8" stroke="#b4b4b4" stroke-width="1" fill="#1f1f1f"></rect><rect x="5.5" y="0.5" width="5" height="5" stroke="#b4b4b4" stroke-width="1" fill="#1f1f1f"></rect></svg>
<svg style="left:1527px;top:76.0px;" width="11" height="11" viewBox="0 0 11 11"><path d="M0.5 0.5L10.5 10.5M10.5 0.5L0.5 10.5" stroke="#b4b4b4" stroke-width="1.1" fill="none"></path></svg>
<div style="left:1532px;top:92px;width:10px;height:397px;background:#505152;"></div>
<div style="left:1535px;top:135px;width:5px;height:33px;background:#e04848;"></div>
<div style="left:406px;top:489px;width:1136px;height:19px;background:#1f1f1f;"></div>
<div style="left:578px;top:130px;width:954px;height:15px;background:linear-gradient(90deg,rgba(72,49,51,0) 0,#483133 11px,#483133 100%)"></div>
<div style="left:578px;top:147px;width:954px;height:15px;background:linear-gradient(90deg,rgba(72,49,51,0) 0,#483133 11px,#483133 100%)"></div>
<span class="t" style="left:416px;top:97.0px;width:23px;text-align:right;font-size:13.3px;line-height:17px;color:#bec0c2;">1</span>
<span class="t" style="left:416px;top:114.0px;width:23px;text-align:right;font-size:13.3px;line-height:17px;color:#bec0c2;">29</span>
<span class="t" style="left:416px;top:131.0px;width:23px;text-align:right;font-size:13.3px;line-height:17px;color:#bec0c2;">30</span>
<span class="t" style="left:416px;top:148.0px;width:23px;text-align:right;font-size:13.3px;line-height:17px;color:#bec0c2;">31</span>
<span class="t" style="left:416px;top:165.0px;width:23px;text-align:right;font-size:13.3px;line-height:17px;color:#bec0c2;">32</span>
<span class="t" style="left:416px;top:182.0px;width:23px;text-align:right;font-size:13.3px;line-height:17px;color:#bec0c2;">33</span>
<span class="t" style="left:416px;top:199.0px;width:23px;text-align:right;font-size:13.3px;line-height:17px;color:#bec0c2;">34</span>
<span class="t" style="left:416px;top:216.0px;width:23px;text-align:right;font-size:13.3px;line-height:17px;color:#d6c540;font-weight:700;">35</span>
<svg style="left:449px;top:101px;" width="5" height="8" viewBox="0 0 5 8"><path d="M0 0L5 4L0 8Z" fill="#a0a2a4"></path></svg>
<svg style="left:448px;top:187px;" width="8" height="5" viewBox="0 0 8 5"><path d="M0 0H8L4 4.5Z" fill="#a0a2a4"></path></svg>
<svg style="left:408px;top:132px;" width="13.4" height="13.4" viewBox="0 0 13.4 13.4"><circle cx="6.7" cy="6.7" r="6.7" fill="#e0454c"></circle><path d="M6.7 2.5V7.8M6.7 9.4V11.1" stroke="#4a1014" stroke-width="1.9"></path></svg>
<svg style="left:408px;top:149px;" width="13.4" height="13.4" viewBox="0 0 13.4 13.4"><circle cx="6.7" cy="6.7" r="6.7" fill="#e0454c"></circle><path d="M6.7 2.5V7.8M6.7 9.4V11.1" stroke="#4a1014" stroke-width="1.9"></path></svg>
<span class="m" style="left:466px;top:97.0px;font-size:14px;letter-spacing:-0.4px;line-height:17px;color:#a8abb0;font-style:italic;">/</span>
<span class="m" style="left:472.4px;top:101px;font-size:20px;letter-spacing:-4px;line-height:20px;color:#94979c">****************************************************************************</span>
<div style="left:1093px;top:96px;width:63px;height:14px;border:1px solid #d6cf9a;border-radius:4px"></div>
<span class="t" style="left: 1115.6px; top: 96.3px; font-size: 12px; line-height: 16px; color: rgb(214, 207, 154); letter-spacing: 0.196px;">...*/</span>
<div style="left:466px;top:144px;width:112px;height:1px;background:#e2533a;"></div>
<div style="left:466px;top:161px;width:112px;height:1px;background:#e2533a;"></div>
<span class="m" style="left:466px;top:131.0px;font-size:14px;letter-spacing:-0.4px;line-height:17px;color:#d6cf9a;"><span style="color:#45c6d6">import</span> <span style="color:#d6cf9a">QtQuick</span></span>
<span class="m" style="left:466px;top:148.0px;font-size:14px;letter-spacing:-0.4px;line-height:17px;color:#d6cf9a;"><span style="color:#45c6d6">import</span> <span style="color:#d6cf9a">content</span></span>
<span class="m" style="left:466px;top:182.0px;font-size:14px;letter-spacing:-0.4px;line-height:17px;color:#d6cf9a;">App {</span>
<span class="m" style="left:466px;top:199.0px;font-size:14px;letter-spacing:-0.4px;line-height:17px;color:#d6cf9a;">}</span>
<div style="left:466px;top:215px;width:2px;height:16px;background:#e8e8e8;"></div>
<svg style="left:613px;top:132px;" width="12" height="12" viewBox="0 0 12 12"><path d="M3.6 0.7H8.4L11.3 3.6V8.4L8.4 11.3H3.6L0.7 8.4V3.6Z" stroke="#e8605e" stroke-width="1.9" fill="none"></path></svg>
<svg style="left:613px;top:149px;" width="12" height="12" viewBox="0 0 12 12"><path d="M3.6 0.7H8.4L11.3 3.6V8.4L8.4 11.3H3.6L0.7 8.4V3.6Z" stroke="#e8605e" stroke-width="1.9" fill="none"></path></svg>
<span class="t" style="left: 627.5px; top: 130.5px; font-size: 12px; line-height: 16px; color: rgb(232, 113, 110); letter-spacing: 0.112px;">QML module not found (QtQuick).</span>
<span class="t" style="left: 627.5px; top: 147.5px; font-size: 12px; line-height: 16px; color: rgb(232, 113, 110); letter-spacing: 0.145px;">QML module not found (content).</span>
<div style="left:406px;top:527px;width:1136px;height:145px;background:#323232;"></div>
<div style="left:406px;top:507px;width:1136px;height:18px;background:#1f1f1f;"></div>
<div style="left:406px;top:525px;width:1136px;height:2px;background:#dadada;"></div>
<div style="left:406px;top:507px;width:1136px;height:1px;background:#555555;"></div>
<div style="left:467px;top:508px;width:1px;height:17px;background:#3a3a3a;"></div>
<span class="t" style="left: 414px; top: 508.5px; font-size: 12px; line-height: 16px; color: rgb(232, 232, 232); letter-spacing: -0.606px;">States</span>
<svg style="left:453px;top:511px;" width="11" height="11" viewBox="0 0 11 11"><path d="M0.5 0.5L10.5 10.5M10.5 0.5L0.5 10.5" stroke="#d0d0d0" stroke-width="1.0" fill="none"></path></svg>
<div style="left:468px;top:508px;width:77px;height:17px;background:#dadada;"></div>
<span class="t" style="left: 477px; top: 508.5px; font-size: 12px; line-height: 16px; color: rgb(26, 26, 26); letter-spacing: 0.013px;">Timeline</span>
<svg style="left:530px;top:511px;" width="11" height="11" viewBox="0 0 11 11"><path d="M0.5 0.5L10.5 10.5M10.5 0.5L0.5 10.5" stroke="#3a3a3a" stroke-width="1.0" fill="none"></path></svg>
<svg style="left:1493px;top:512.5px;" width="11" height="8" viewBox="0 0 11 8"><path d="M0.5 0.5L5.5 7L10.5 0.5" stroke="#b4b4b4" stroke-width="1.1" fill="none"></path></svg>
<svg style="left:1510px;top:511.0px;" width="11" height="11" viewBox="0 0 11 11"><rect x="0.5" y="2.5" width="8" height="8" stroke="#b4b4b4" stroke-width="1" fill="#1f1f1f"></rect><rect x="5.5" y="0.5" width="5" height="5" stroke="#b4b4b4" stroke-width="1" fill="#1f1f1f"></rect></svg>
<svg style="left:1527px;top:511.0px;" width="11" height="11" viewBox="0 0 11 11"><path d="M0.5 0.5L10.5 10.5M10.5 0.5L0.5 10.5" stroke="#b4b4b4" stroke-width="1.1" fill="none"></path></svg>
<svg style="left:417px;top:538px;" width="9" height="9" viewBox="0 0 9 9"><path d="M4.5 0V9M0 4.5H9" stroke="#6a6a6a" stroke-width="1.6"></path></svg>
<span class="t" style="left: 879px; top: 567px; font-size: 12px; line-height: 16px; color: rgb(244, 244, 244); letter-spacing: -0.021px;">This file does not contain a timeline.</span>
<span class="t" style="left: 807px; top: 599px; font-size: 12px; line-height: 16px; color: rgb(244, 244, 244); letter-spacing: 0.034px;">To create an animation, add a timeline by clicking the + button.</span>
<span class="t" style="left: 877px; top: 617px; font-size: 12px; line-height: 16px; color: rgb(244, 244, 244); letter-spacing: 0.007px;">To edit the timeline settings, click</span>
<svg style="left:1056px;top:618px;" width="14" height="13" viewBox="0 0 14 13"><rect x="0" y="0" width="14" height="13" fill="#b8b8b8"></rect><path d="M1.2 1.2H2.8V3.4H1.2ZM1.2 5.4H2.8V7.6H1.2ZM1.2 9.6H2.8V11.8H1.2ZM11.2 1.2H12.8V3.4H11.2ZM11.2 5.4H12.8V7.6H11.2ZM11.2 9.6H12.8V11.8H11.2ZM4.2 1.2H9.8V5.8H4.2ZM4.2 7.2H9.8V11.8H4.2Z" fill="#323232"></path></svg>
<div style="left:406px;top:692px;width:1136px;height:294px;background:#27282a;"></div>
<div style="left:406px;top:672px;width:1136px;height:18px;background:#1f1f1f;"></div>
<div style="left:406px;top:690px;width:1136px;height:2px;background:#dadada;"></div>
<div style="left:406px;top:672px;width:1136px;height:1px;background:#555555;"></div>
<div style="left:406px;top:673px;width:98px;height:17px;background:#dadada;"></div>
<span class="t" style="left: 414px; top: 673.5px; font-size: 12px; line-height: 16px; color: rgb(26, 26, 26); letter-spacing: -0.039px;">Output Pane</span>
<svg style="left:489px;top:676px;" width="11" height="11" viewBox="0 0 11 11"><path d="M0.5 0.5L10.5 10.5M10.5 0.5L0.5 10.5" stroke="#3a3a3a" stroke-width="1.0" fill="none"></path></svg>
<svg style="left:1493px;top:677.5px;" width="11" height="8" viewBox="0 0 11 8"><path d="M0.5 0.5L5.5 7L10.5 0.5" stroke="#b4b4b4" stroke-width="1.1" fill="none"></path></svg>
<svg style="left:1510px;top:676.0px;" width="11" height="11" viewBox="0 0 11 11"><rect x="0.5" y="2.5" width="8" height="8" stroke="#b4b4b4" stroke-width="1" fill="#1f1f1f"></rect><rect x="5.5" y="0.5" width="5" height="5" stroke="#b4b4b4" stroke-width="1" fill="#1f1f1f"></rect></svg>
<svg style="left:1527px;top:676.0px;" width="11" height="11" viewBox="0 0 11 11"><path d="M0.5 0.5L10.5 10.5M10.5 0.5L0.5 10.5" stroke="#b4b4b4" stroke-width="1.1" fill="none"></path></svg>
<div style="left:406px;top:692px;width:1136px;height:24px;background:#1f1f1f;"></div>
<div style="left:548px;top:696px;width:1px;height:17px;background:#6a6a6a;"></div>
<svg style="left:558px;top:697px;" width="15" height="15" viewBox="0 0 15 15"><path d="M4.5 0H6.5V6H4.5ZM2.5 6H8.5L10 11H1Z" fill="#c8c8c8"></path><path d="M9 9.5H14.5V14.5H8" stroke="#c8c8c8" stroke-width="1.1" fill="none"></path></svg>
<svg style="left:585px;top:698px;" width="8" height="13" viewBox="0 0 8 13"><path d="M7 0.5L1 6.5L7 12.5" stroke="#e6c02a" stroke-width="1.5" fill="none"></path></svg>
<svg style="left:608px;top:698px;" width="8" height="13" viewBox="0 0 8 13"><path d="M1 0.5L7 6.5L1 12.5" stroke="#e6c02a" stroke-width="1.5" fill="none"></path></svg>
<div style="left:625px;top:693px;width:24px;height:23px;background:#0c0c0c;"></div>
<svg style="left:630.7px;top:698.5px;" width="12.6" height="12" viewBox="0 0 14 13"><path d="M7 0.3L13.8 12.7H0.2Z" fill="#f7e07c"></path><path d="M7 4V8.6M7 9.8V11.4" stroke="#1a1a1a" stroke-width="1.6"></path></svg>
<svg style="left:655px;top:699.5px;" width="14" height="12" viewBox="0 0 14 12"><path d="M0 0H10L6.2 4.5V10H3.8V4.5Z" fill="#d0d0d0"></path><path d="M9.5 9H13.5L11.5 11.5Z" fill="#d0d0d0"></path></svg>
<div style="left:673px;top:693px;width:156px;height:22px;background:#262626;"></div>
<svg style="left:679px;top:698px;" width="15" height="14" viewBox="0 0 15 14"><circle cx="9" cy="5" r="4.2" stroke="#c8c8c8" stroke-width="1.4" fill="none"></circle><path d="M6 8L0.8 13" stroke="#c8c8c8" stroke-width="1.6"></path><path d="M10 11.5H14L12 13.8Z" fill="#c8c8c8"></path></svg>
<span class="t" style="left: 700px; top: 697px; font-size: 12px; line-height: 16px; color: rgb(138, 138, 138); letter-spacing: -0.134px;">Filter</span>
<svg style="left:1500px;top:702px;" width="11" height="6" viewBox="0 0 11 6"><path d="M0.5 5.5L5.5 0.8L10.5 5.5" stroke="#c8c8c8" stroke-width="1.3" fill="none"></path></svg>
<svg style="left:1525px;top:701px;" width="11" height="10" viewBox="0 0 11 10"><rect x="0.6" y="0.6" width="9.8" height="8.8" stroke="#c8c8c8" stroke-width="1.2" fill="none"></rect><rect x="0" y="0" width="11" height="2.4" fill="#c8c8c8"></rect><path d="M3 4.5H8L5.5 7.2Z" fill="#c8c8c8"></path></svg>
<div style="left:406px;top:716px;width:1136px;height:34px;background:#235c96;"></div>
<div style="left:406px;top:750px;width:1136px;height:1px;background:#8e8e8e;"></div>
<div style="left:406px;top:751px;width:1136px;height:19px;background:#202020;"></div>
<div style="left:406px;top:770px;width:1136px;height:1px;background:#8e8e8e;"></div>
<svg style="left:410px;top:720.3px;" width="12" height="12" viewBox="0 0 12 12"><path d="M3.4 0H8.6L12 3.4V8.6L8.6 12H3.4L0 8.6V3.4Z" fill="#e05252"></path><path d="M6 2.4V7M6 8.4V10" stroke="#3a1014" stroke-width="1.6"></path></svg>
<svg style="left:410px;top:755.3px;" width="12" height="12" viewBox="0 0 12 12"><path d="M3.4 0H8.6L12 3.4V8.6L8.6 12H3.4L0 8.6V3.4Z" fill="#e05252"></path><path d="M6 2.4V7M6 8.4V10" stroke="#3a1014" stroke-width="1.6"></path></svg>
<span class="t" style="left: 428px; top: 719px; font-size: 12px; line-height: 16px; color: rgb(255, 255, 255); letter-spacing: -0.046px;">package import requires a version number</span>
<span class="t" style="left: 428px; top: 735px; font-size: 12px; line-height: 16px; color: rgb(156, 196, 238); letter-spacing: -0.003px;">C:\Space4_ClusterHMI\QtBugRepotrs\21\FigmaToQML\main.qml</span>
<span class="t" style="left: 1300.5px; top: 719px; font-size: 12px; line-height: 16px; color: rgb(255, 255, 255); letter-spacing: 0.33px;">main.qml</span>
<span class="t" style="left:1527.5px;top:719.0px;font-size:12px;line-height:16px;color:#fff;">30</span>
<span class="t" style="left: 428px; top: 754px; font-size: 12px; line-height: 16px; color: rgb(240, 240, 240); letter-spacing: -0.046px;">package import requires a version number</span>
<span class="t" style="left: 1300.5px; top: 754px; font-size: 12px; line-height: 16px; color: rgb(240, 240, 240); letter-spacing: 0.33px;">main.qml</span>
<span class="t" style="left:1527.5px;top:754.0px;font-size:12px;line-height:16px;color:#f0f0f0;">31</span>
<div style="left:1543px;top:92px;width:377px;height:620px;background:#323232;"></div>
<div style="left:1543px;top:72px;width:377px;height:18px;background:#1f1f1f;"></div>
<div style="left:1543px;top:90px;width:377px;height:2px;background:#dadada;"></div>
<div style="left:1543px;top:73px;width:84px;height:17px;background:#dadada;"></div>
<span class="t" style="left: 1551px; top: 73.5px; font-size: 12px; line-height: 16px; color: rgb(26, 26, 26); letter-spacing: -0.189px;">Properties</span>
<svg style="left:1612px;top:76px;" width="11" height="11" viewBox="0 0 11 11"><path d="M0.5 0.5L10.5 10.5M10.5 0.5L0.5 10.5" stroke="#3a3a3a" stroke-width="1.0" fill="none"></path></svg>
<svg style="left:1871px;top:77.5px;" width="11" height="8" viewBox="0 0 11 8"><path d="M0.5 0.5L5.5 7L10.5 0.5" stroke="#b4b4b4" stroke-width="1.1" fill="none"></path></svg>
<svg style="left:1888px;top:76.0px;" width="11" height="11" viewBox="0 0 11 11"><rect x="0.5" y="2.5" width="8" height="8" stroke="#b4b4b4" stroke-width="1" fill="#1f1f1f"></rect><rect x="5.5" y="0.5" width="5" height="5" stroke="#b4b4b4" stroke-width="1" fill="#1f1f1f"></rect></svg>
<svg style="left:1905px;top:76.0px;" width="11" height="11" viewBox="0 0 11 11"><path d="M0.5 0.5L10.5 10.5M10.5 0.5L0.5 10.5" stroke="#b4b4b4" stroke-width="1.1" fill="none"></path></svg>
<span class="t" style="left: 1592.5px; top: 366.3px; font-size: 17.3px; line-height: 24px; color: rgb(244, 244, 244); letter-spacing: 0.245px;">Select a component in Form Editor,</span>
<span class="t" style="left: 1598px; top: 390.6px; font-size: 17.3px; line-height: 24px; color: rgb(244, 244, 244); letter-spacing: 0.255px;">Navigator, or Text Editor to see its</span>
<span class="t" style="left: 1689.5px; top: 414.7px; font-size: 17.3px; line-height: 24px; color: rgb(244, 244, 244); letter-spacing: 0.284px;">properties.</span>
<div style="left:1543px;top:731px;width:377px;height:255px;background:#323232;"></div>
<div style="left:1543px;top:711px;width:377px;height:18px;background:#1f1f1f;"></div>
<div style="left:1543px;top:729px;width:377px;height:2px;background:#dadada;"></div>
<div style="left:1543px;top:711px;width:377px;height:1px;background:#555555;"></div>
<div style="left:1543px;top:712px;width:121px;height:17px;background:#dadada;"></div>
<span class="t" style="left: 1552px; top: 712.5px; font-size: 12px; line-height: 16px; color: rgb(26, 26, 26); letter-spacing: -0.06px;">Connection View</span>
<svg style="left:1650px;top:715px;" width="11" height="11" viewBox="0 0 11 11"><path d="M0.5 0.5L10.5 10.5M10.5 0.5L0.5 10.5" stroke="#3a3a3a" stroke-width="1.0" fill="none"></path></svg>
<svg style="left:1871px;top:716.5px;" width="11" height="8" viewBox="0 0 11 8"><path d="M0.5 0.5L5.5 7L10.5 0.5" stroke="#b4b4b4" stroke-width="1.1" fill="none"></path></svg>
<svg style="left:1888px;top:715.0px;" width="11" height="11" viewBox="0 0 11 11"><rect x="0.5" y="2.5" width="8" height="8" stroke="#b4b4b4" stroke-width="1" fill="#1f1f1f"></rect><rect x="5.5" y="0.5" width="5" height="5" stroke="#b4b4b4" stroke-width="1" fill="#1f1f1f"></rect></svg>
<svg style="left:1905px;top:715.0px;" width="11" height="11" viewBox="0 0 11 11"><path d="M0.5 0.5L10.5 10.5M10.5 0.5L0.5 10.5" stroke="#b4b4b4" stroke-width="1.1" fill="none"></path></svg>
<div style="left:1543px;top:732px;width:276px;height:22px;background:#1f1f1f;"></div>
<div style="left:1543px;top:754px;width:377px;height:2px;background:#f0f0f0;"></div>
<div style="left:1543px;top:732px;width:92px;height:22px;background:#dadada;"></div>
<span class="t" style="left: 1557px; top: 735.5px; font-size: 12px; line-height: 16px; color: rgb(17, 17, 17); -webkit-text-stroke: 0.3px rgb(17, 17, 17); letter-spacing: -0.272px;">Connections</span>
<span class="t" style="left: 1658px; top: 735.5px; font-size: 12px; line-height: 16px; color: rgb(244, 244, 244); -webkit-text-stroke: 0.3px rgb(244, 244, 244); letter-spacing: 0.067px;">Bindings</span>
<span class="t" style="left: 1747px; top: 735.5px; font-size: 12px; line-height: 16px; color: rgb(244, 244, 244); -webkit-text-stroke: 0.3px rgb(244, 244, 244); letter-spacing: -0.245px;">Properties</span>
<div style="left:1543px;top:756px;width:377px;height:22px;background:#1f1f1f;"></div>
<svg style="left:1550px;top:762px;" width="12" height="12" viewBox="0 0 12 12"><path d="M6 0V12M0 6H12" stroke="#8a8a8a" stroke-width="1.5"></path></svg>
<svg style="left:1574px;top:762px;" width="12" height="12" viewBox="0 0 12 12"><path d="M0 6H12" stroke="#8a8a8a" stroke-width="1.5"></path></svg>
<div style="left:1543px;top:778px;width:377px;height:21px;background:#1f1f1f;"></div>
<div style="left:1622px;top:779px;width:1px;height:20px;background:#323232;"></div>
<div style="left:1783px;top:779px;width:1px;height:20px;background:#323232;"></div>
<span class="t" style="left: 1566px; top: 782.7px; font-size: 12px; line-height: 16px; color: rgb(244, 244, 244); -webkit-text-stroke: 0.2px rgb(244, 244, 244); letter-spacing: -0.272px;">Target</span>
<span class="t" style="left: 1665px; top: 782.7px; font-size: 12px; line-height: 16px; color: rgb(244, 244, 244); -webkit-text-stroke: 0.2px rgb(244, 244, 244); letter-spacing: -0.248px;">Signal Handler</span>
<span class="t" style="left: 1846.5px; top: 782.7px; font-size: 12px; line-height: 16px; color: rgb(244, 244, 244); -webkit-text-stroke: 0.2px rgb(244, 244, 244); letter-spacing: -0.072px;">Action</span>
<div style="left:1543px;top:975px;width:377px;height:10px;background:#3e3e3e;"></div>
<div style="left:1543px;top:975px;width:251px;height:10px;background:#505050;"></div>
<div style="left:39px;top:987px;width:1881px;height:27px;background:#504e00;"></div>
<div style="left:39px;top:986px;width:1881px;height:1px;background:#6a6a6a;"></div>
<span class="t" style="left: 43px; top: 993px; font-size: 12px; line-height: 16px; color: rgb(244, 244, 244); letter-spacing: -0.048px;">Qt Design Studio can collect crash reports for the sole purpose of fixing bugs. To enable this feature go to Tools &gt; Options &gt; Environment &gt; System.</span>
<div style="left:1601px;top:989px;width:79px;height:21px;background:#2c2c2c;border:1px solid #161616;border-radius:3px"></div>
<span class="t" style="left: 1608px; top: 993px; font-size: 12px; line-height: 16px; color: rgb(240, 240, 240); letter-spacing: -0.277px;"><u>S</u>how Details</span>
<div style="left:1688px;top:989px;width:74px;height:21px;background:#2c2c2c;border:1px solid #161616;border-radius:3px"></div>
<span class="t" style="left: 1695px; top: 993px; font-size: 12px; line-height: 16px; color: rgb(240, 240, 240); letter-spacing: -0.004px;">Configure...</span>
<div style="left:1770px;top:989px;width:116px;height:21px;background:#2c2c2c;border:1px solid #161616;border-radius:3px"></div>
<span class="t" style="left: 1777px; top: 993px; font-size: 12px; line-height: 16px; color: rgb(240, 240, 240); letter-spacing: 0.027px;">Do Not Show Again</span>
<svg style="left:1901px;top:996px;" width="10" height="10" viewBox="0 0 10 10"><path d="M0.5 0.5L9.5 9.5M9.5 0.5L0.5 9.5" stroke="#f0f0f0" stroke-width="1.4" fill="none"></path></svg>
<div style="left:39px;top:1014px;width:1881px;height:26px;background:#1e1e1e;"></div>
<svg style="left:47px;top:1022px;" width="11" height="11" viewBox="0 0 11 11"><rect x="0.5" y="0.5" width="10" height="10" stroke="#707070" fill="none"></rect><rect x="0" y="0" width="5" height="11" fill="#707070"></rect></svg>
<div style="left:71px;top:1017px;width:200px;height:21px;background:#282828;"></div>
<svg style="left:78px;top:1021px;" width="15" height="14" viewBox="0 0 15 14"><circle cx="9" cy="5" r="4.2" stroke="#c8c8c8" stroke-width="1.4" fill="none"></circle><path d="M6 8L0.8 13" stroke="#c8c8c8" stroke-width="1.6"></path><path d="M10 11.5H14L12 13.8Z" fill="#c8c8c8"></path></svg>
<span class="t" style="left: 98.5px; top: 1020.5px; font-size: 12px; line-height: 16px; color: rgb(138, 138, 138); letter-spacing: -0.124px;">Type to locate (Ctrl+K)</span>
<div style="left:274px;top:1018px;width:1px;height:20px;background:#7a7a7a;"></div>
<div style="left:280px;top:1017px;width:69px;height:22px;background:#0e0e0e;"></div>
<span class="t" style="left:284.5px;top:1020.5px;font-size:12px;line-height:16px;color:#f0f0f0;">1</span>
<span class="t" style="left: 298px; top: 1020.5px; font-size: 12px; line-height: 16px; color: rgb(240, 240, 240); letter-spacing: -0.637px;">Issues</span>
<div style="left:331px;top:1021px;width:15px;height:13px;border-radius:7px;background:#e8e8e8"></div>
<span class="t" style="left:335px;top:1019.5px;font-size:11px;line-height:16px;color:#111;">2</span>
<span class="t" style="left:361.5px;top:1020.5px;font-size:12px;line-height:16px;color:#f0f0f0;">2</span>
<span class="t" style="left: 375.5px; top: 1020.5px; font-size: 12px; line-height: 16px; color: rgb(240, 240, 240); letter-spacing: -0.529px;">Search Results</span>
<span class="t" style="left:468px;top:1020.5px;font-size:12px;line-height:16px;color:#f0f0f0;">3</span>
<span class="t" style="left: 482px; top: 1020.5px; font-size: 12px; line-height: 16px; color: rgb(240, 240, 240); letter-spacing: 0.232px;">Application Output</span>
<span class="t" style="left:601px;top:1020.5px;font-size:12px;line-height:16px;color:#f0f0f0;">5</span>
<span class="t" style="left: 615px; top: 1020.5px; font-size: 12px; line-height: 16px; color: rgb(240, 240, 240); letter-spacing: -0.104px;">QML Debugger Console</span>
<svg style="left:760px;top:1022.5px;" width="8" height="11" viewBox="0 0 8 11"><path d="M4 0L8 4.3H0Z M4 10.6L8 6.3H0Z" fill="#c8c8c8"></path></svg>
<div style="left:1865px;top:1017px;width:24px;height:21px;background:#0c0c0c;"></div>
<svg style="left:1870px;top:1019px;" width="14" height="14" viewBox="0 0 14 14"><path d="M5 2.5H9L7 0Z" fill="#c8c8c8"></path><rect x="0.6" y="7.6" width="12.8" height="4.8" rx="1.2" stroke="#c8c8c8" stroke-width="1.2" fill="none"></rect><rect x="2" y="9" width="10" height="2" fill="#c8c8c8"></rect></svg>
<svg style="left:1902px;top:1022px;" width="11" height="11" viewBox="0 0 11 11"><rect x="0.5" y="0.5" width="10" height="10" stroke="#707070" fill="none"></rect><rect x="6" y="0" width="5" height="11" fill="#707070"></rect></svg>
</body></html>
